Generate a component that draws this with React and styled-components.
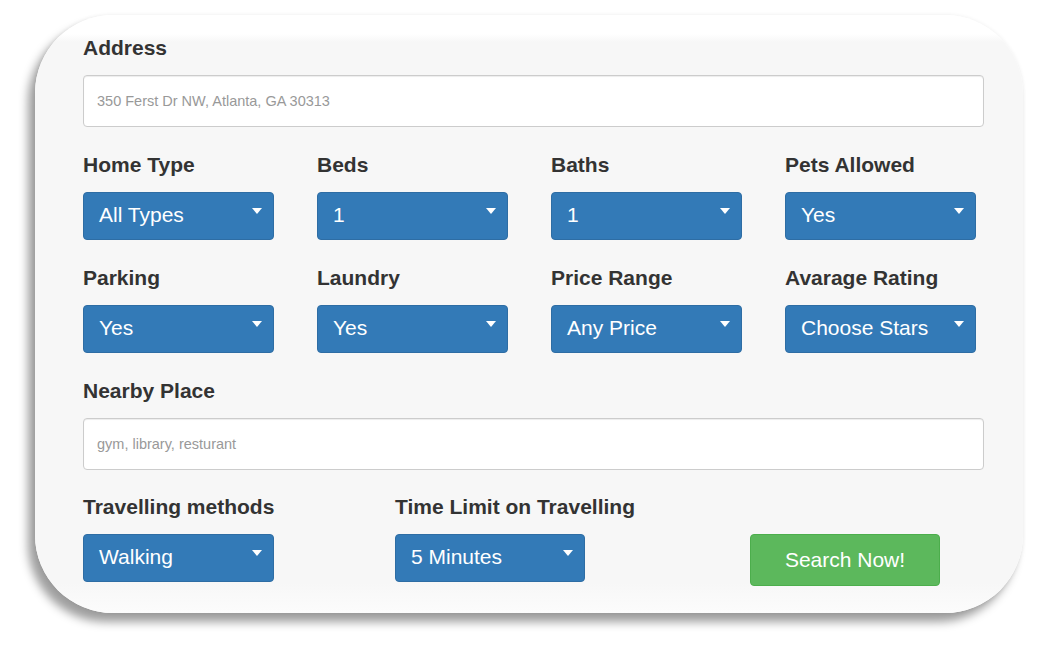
import React from "react";
import styled, { createGlobalStyle } from "styled-components";

const Global = createGlobalStyle`
  html, body { margin: 0; padding: 0; background: #ffffff; }
  body { font-family: "Liberation Sans", Arial, Helvetica, sans-serif; }
  * { box-sizing: border-box; }
`;

const Page = styled.div`
  width: 1040px;
  height: 651px;
  padding: 15px 0 0 35px;
  overflow: hidden;
`;

const Card = styled.form`
  width: 988px;
  height: 598px;
  border-radius: 78px;
  padding: 21px 39px 0 48px;
  background: linear-gradient(
    to bottom,
    #ffffff 0px,
    #ffffff 19px,
    #f7f7f7 27px,
    #f7f7f7 calc(100% - 30px),
    #fcfcfc 100%
  );
  box-shadow: -7px 9px 10px rgba(0, 0, 0, 0.38), 0 0 4px rgba(0, 0, 0, 0.07);
  display: flex;
  flex-direction: column;
  gap: 26px;
`;

const Field = styled.div`
  display: flex;
  flex-direction: column;
`;

const Label = styled.label`
  font-size: 21px;
  line-height: 24px;
  font-weight: bold;
  color: #333333;
  margin-bottom: 15px;
  white-space: nowrap;
`;

const TextInput = styled.input`
  width: 100%;
  height: 52px;
  border: 1px solid #cccccc;
  border-radius: 4px;
  background: #ffffff;
  box-shadow: inset 0 1px 1px rgba(0, 0, 0, 0.075);
  padding: 0 13px;
  font-family: "Liberation Sans", Arial, sans-serif;
  font-size: 14.5px;
  color: #555555;
  outline: none;
  &::placeholder { color: #999999; }
`;

const Grid = styled.div`
  display: grid;
  grid-template-columns: repeat(4, 191px);
  column-gap: 43px;
  row-gap: 26px;
`;

const LastRow = styled.div`
  display: grid;
  grid-template-columns: 312px 355px 190px;
  align-items: start;
  margin-top: -1px;
`;

const Select = styled.button`
  width: ${(p) => p.$w || 191}px;
  height: 48px;
  border: 1px solid #2e6da4;
  border-radius: 4px;
  background: #337ab7;
  color: #ffffff;
  font-family: "Liberation Sans", Arial, sans-serif;
  font-size: 21px;
  padding: 0 11px 2px 15px;
  display: flex;
  align-items: center;
  justify-content: space-between;
  text-align: left;
  cursor: pointer;
`;

const Caret = styled.span`
  width: 0;
  height: 0;
  border-top: 6px solid #ffffff;
  border-left: 5.5px solid transparent;
  border-right: 5.5px solid transparent;
  margin-bottom: 8px;
`;

const SearchButton = styled.button`
  width: 190px;
  height: 52px;
  margin-top: 39px;
  border: 1px solid #4cae4c;
  border-radius: 4px;
  background: #5cb85c;
  color: #ffffff;
  font-family: "Liberation Sans", Arial, sans-serif;
  font-size: 21px;
  cursor: pointer;
`;

const Dropdown = ({ label, value, w }) => (
  <Field>
    <Label>{label}</Label>
    <Select type="button" $w={w}>
      <span>{value}</span>
      <Caret />
    </Select>
  </Field>
);

const filters = [
  ["Home Type", "All Types"],
  ["Beds", "1"],
  ["Baths", "1"],
  ["Pets Allowed", "Yes"],
  ["Parking", "Yes"],
  ["Laundry", "Yes"],
  ["Price Range", "Any Price"],
  ["Avarage Rating", "Choose Stars"],
];

export default function App() {
  return (
    <>
      <Global />
      <Page>
        <Card onSubmit={(e) => e.preventDefault()}>
          <Field>
            <Label>Address</Label>
            <TextInput placeholder="350 Ferst Dr NW, Atlanta, GA 30313" />
          </Field>
          <Grid>
            {filters.map(([l, v]) => (
              <Dropdown key={l} label={l} value={v} />
            ))}
          </Grid>
          <Field>
            <Label>Nearby Place</Label>
            <TextInput placeholder="gym, library, resturant" />
          </Field>
          <LastRow>
            <Dropdown label="Travelling methods" value="Walking" />
            <Dropdown label="Time Limit on Travelling" value="5 Minutes" w={190} />
            <SearchButton type="submit">Search Now!</SearchButton>
          </LastRow>
        </Card>
      </Page>
    </>
  );
}
